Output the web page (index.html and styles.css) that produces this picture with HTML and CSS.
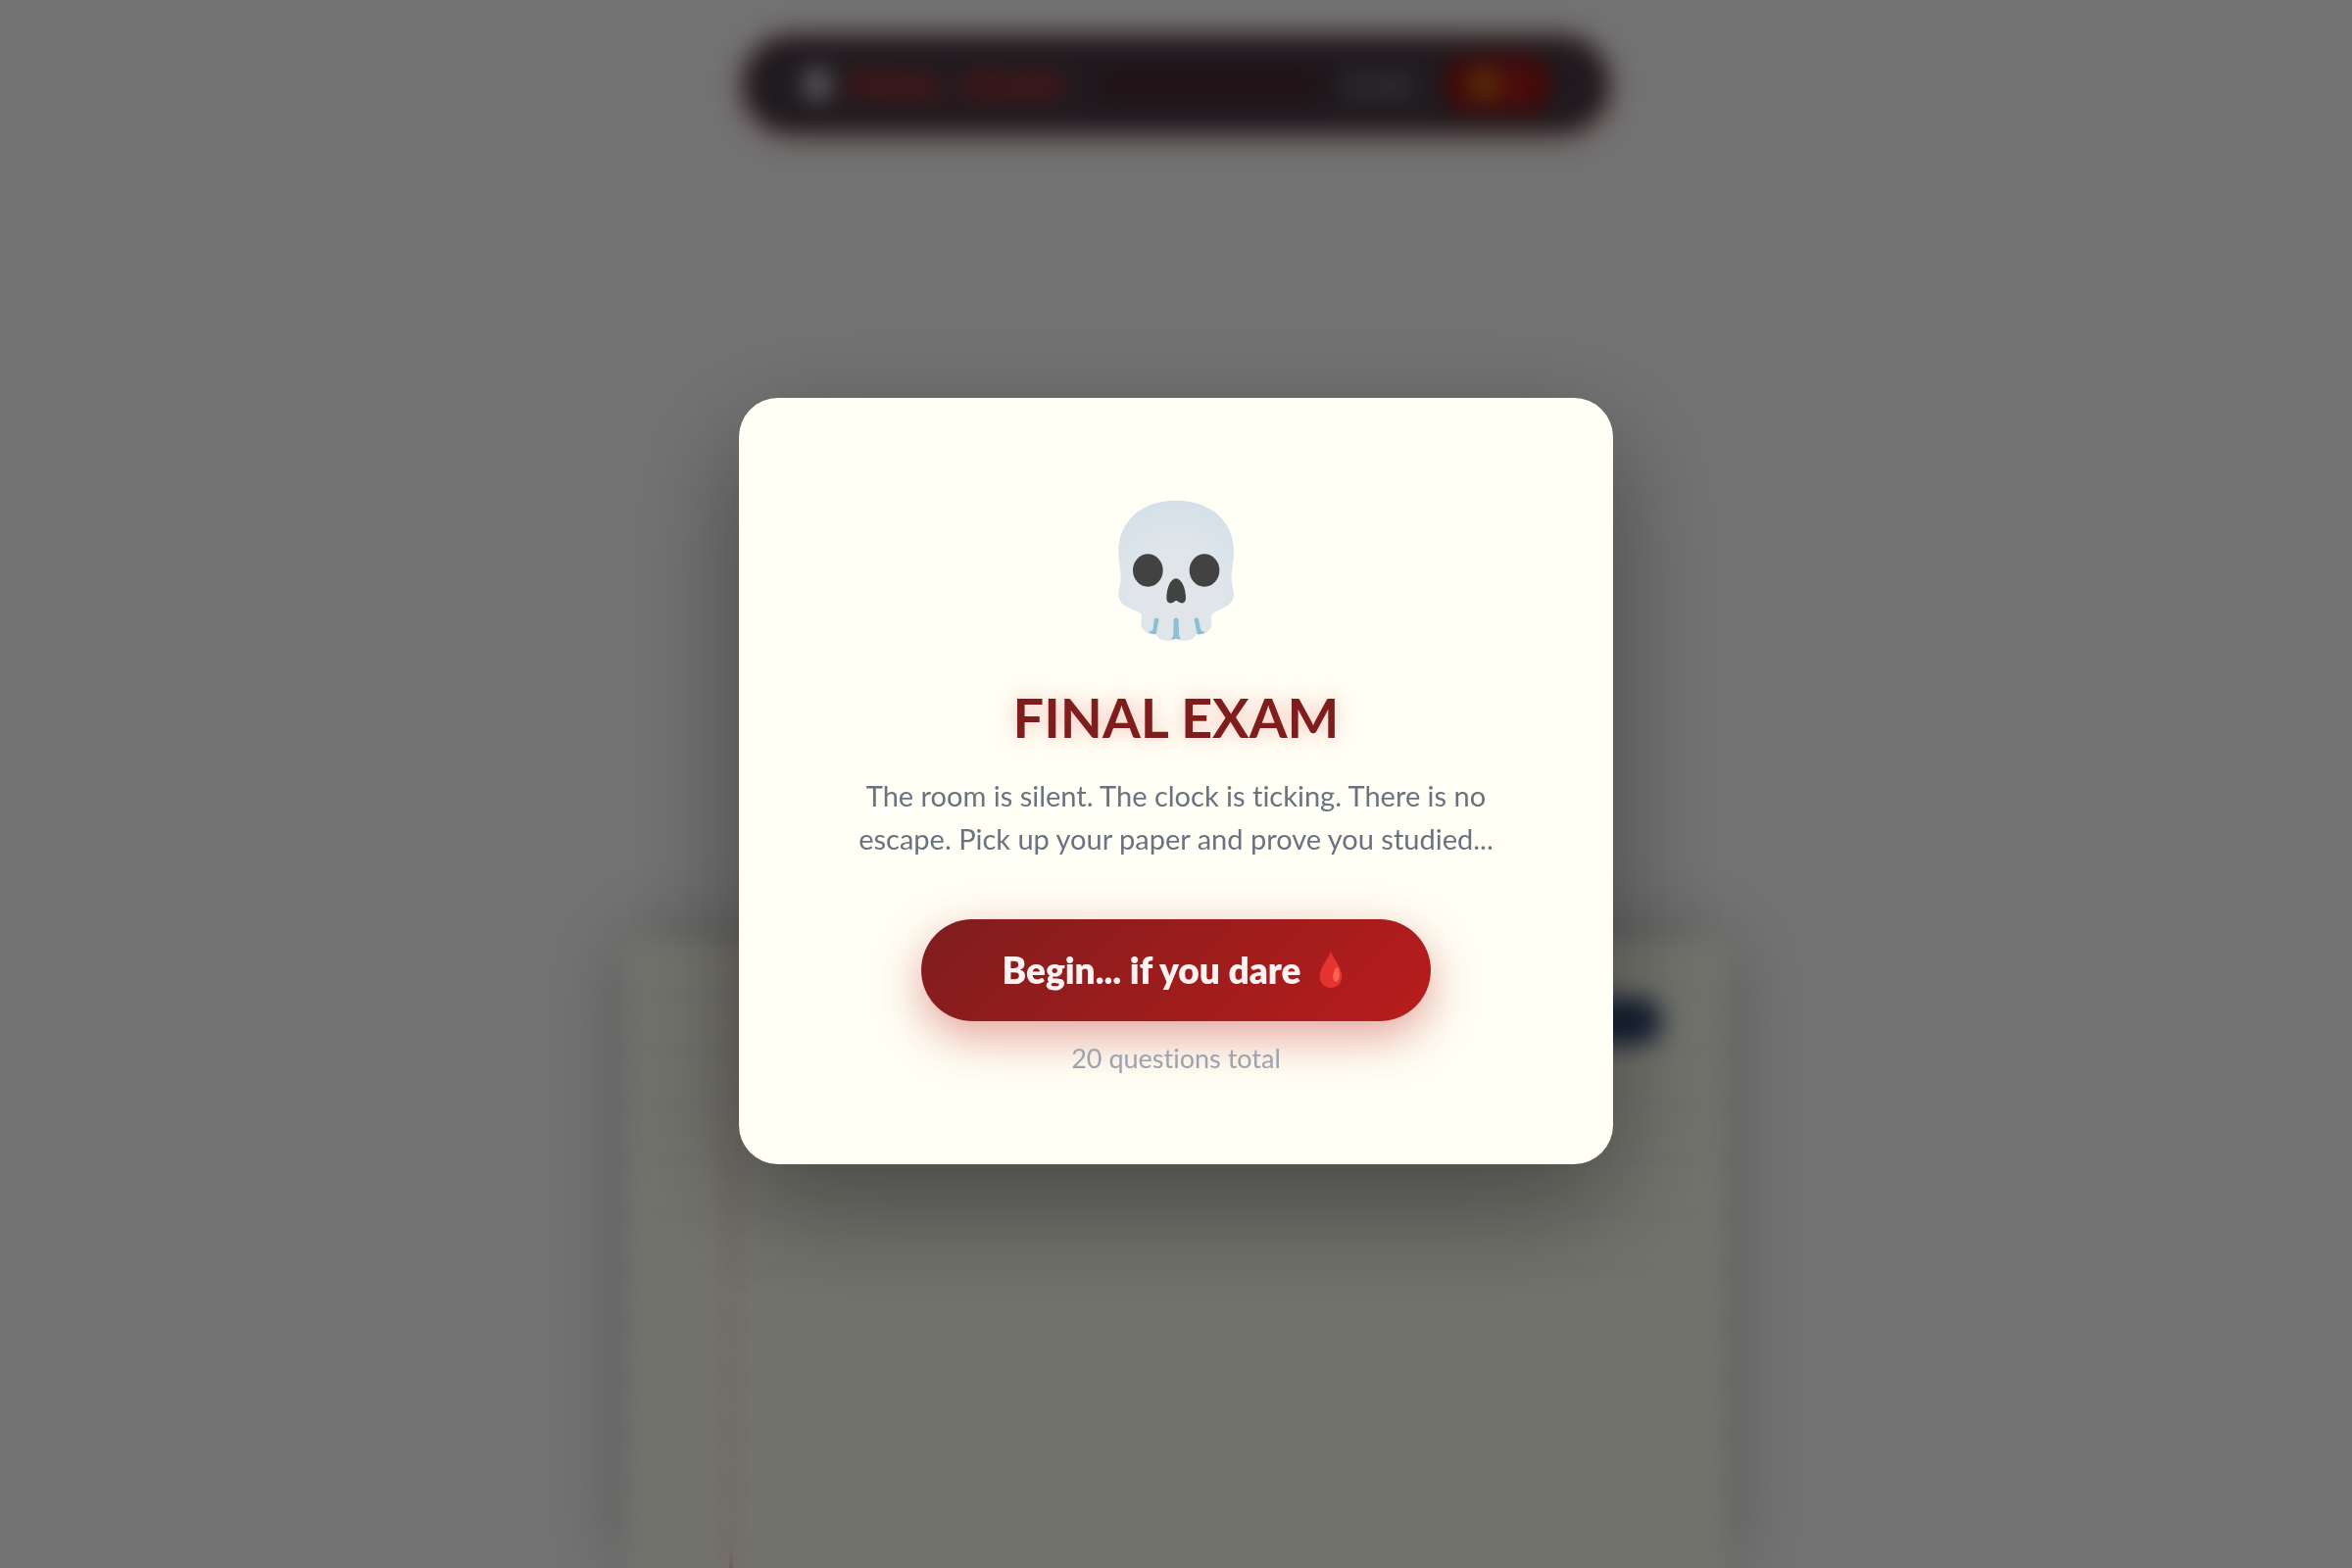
FILE: index.html
```html
<!DOCTYPE html>
<html lang="en">
<head>
<meta charset="utf-8">
<meta name="viewport" content="width=device-width, initial-scale=1">
<title>Final Exam</title>
<link rel="stylesheet" href="styles.css">
</head>
<body>
<div class="page" aria-hidden="true">
  <header class="exam-bar">
    <span class="exam-mark"></span>
    <span class="exam-name"><span>FINAL</span><span>EXAM</span></span>
    <span class="exam-progress"></span>
    <span class="exam-count">0/20</span>
    <button class="exam-lives" type="button" tabindex="-1"><span class="coin"></span>0</button>
  </header>
  <main class="paper">
    <button class="paper-action" type="button" tabindex="-1"></button>
  </main>
</div>

<div class="overlay">
  <section class="card" role="dialog" aria-modal="true" aria-labelledby="exam-title">
    <svg class="skull" viewBox="120 90 360 432" aria-hidden="true">
      <defs>
        <radialGradient id="bone" gradientUnits="userSpaceOnUse" cx="300" cy="380" r="290">
          <stop offset="0" stop-color="#e3e5ea"/>
          <stop offset=".5" stop-color="#dfe5ea"/>
          <stop offset="1" stop-color="#d5e0e8"/>
        </radialGradient>
      </defs>
      <path fill="url(#bone)" d="M300 92C190 92 124 160 124 246C124 285 131 305 131 330C131 350 124 358 124 382C124 412 160 424 186 434C198 439 194 450 193 466C191 489 210 503 239 503C246 516 259 521 274 521C286 521 293 520 300 515C307 520 316 521 328 521C342 521 354 516 362 503C390 503 412 489 409 466C408 450 404 444 418 434C440 423 477 411 477 380C477 358 470 350 470 330C470 305 477 285 477 246C477 160 410 92 300 92Z"/>
      <ellipse cx="214" cy="306" rx="46" ry="50" fill="#424242"/>
      <ellipse cx="387" cy="306" rx="46" ry="50" fill="#424242"/>
      <path fill="#424242" d="M300 331C283 331 271 361 271 391C271 405 281 409 289 405C296 401 298 398 300 398C303 398 306 402 313 405C322 409 330 404 330 391C330 361 317 331 300 331Z"/>
      <path fill="#8bc0d3" d="M233 459C235 449 248 450 247 459L239 501C229 502 220 499 214 494C226 493 229 490 230 483ZM293 458C293 449 308 449 308 458L309 500C310 510 312 512 315 515C308 519 304 515 300 515C296 515 292 519 285 515C289 512 292 509 292 500ZM356 459C355 450 368 449 370 459L374 483C375 490 381 493 390 496C384 501 374 503 365 501Z"/>
    </svg>
    <h1 class="title" id="exam-title">FINAL EXAM</h1>
    <p class="intro">The room is silent. The clock is ticking. There is no escape. Pick up your paper and prove you studied...</p>
    <button class="begin" type="button">Begin... if you dare
      <svg class="drop" viewBox="0 0 66 111" aria-hidden="true">
        <path fill="#e53330" d="M33 0C29 22 0 48 0 77C0 98 14 111 33 111C52 111 66 98 66 77C66 48 38 22 33 0Z"/>
        <path fill="#ff6450" d="M50 49C45 54 40 66 40 79C40 90 45 94 50 92C56 90 59 81 59 72C59 61 55 51 50 49Z"/>
      </svg>
    </button>
    <p class="total">20 questions total</p>
  </section>
</div>
</body>
</html>
```
FILE: styles.css
```css
* {
  box-sizing: border-box;
}

body {
  margin: 0;
  background: #ffffff;
  font-family: Lato, "Noto Sans", sans-serif;
  font-variant-ligatures: none;
}

button {
  border: 0;
  font: inherit;
}

.page {
  display: flex;
  flex-direction: column;
  align-items: center;
  justify-content: space-between;
  height: 100vh;
  padding-top: 36px;
  overflow: hidden;
}

.exam-bar {
  display: flex;
  align-items: center;
  width: 884px;
  max-width: 94%;
  height: 100px;
  padding: 0 56px 0 60px;
  border: 4px solid #6d2a30;
  border-radius: 52px;
  background: #463b45;
  box-shadow: 0 4px 32px rgba(127, 29, 29, 0.4);
}

.exam-mark {
  width: 24px;
  height: 32px;
  border-radius: 12px;
  background: #e5e7eb;
}

.exam-name {
  display: flex;
  gap: 20px;
  margin-left: 20px;
  color: #e02626;
  font-size: 34px;
  font-weight: 800;
}

.exam-progress {
  flex: 1;
  height: 24px;
  margin: 0 20px 0 32px;
  border-radius: 12px;
  background: #4a252d;
}

.exam-count {
  color: #9ca3af;
  font-size: 29px;
  font-weight: 700;
}

.exam-lives {
  display: flex;
  align-items: center;
  justify-content: center;
  gap: 12px;
  width: 108px;
  height: 56px;
  margin-left: 36px;
  border-radius: 24px;
  background: #9c1010;
  color: #f87171;
  font-size: 29px;
}

.coin {
  width: 24px;
  height: 28px;
  border-radius: 50%;
  background: #d69e1a;
}

.paper {
  display: flex;
  justify-content: flex-end;
  align-items: flex-start;
  width: 1120px;
  max-width: 94%;
  height: 40vh;
  padding: 58px 64px;
  background:
    linear-gradient(90deg, transparent 104px, #f3a6a6 104px, #f3a6a6 108px, transparent 108px),
    repeating-linear-gradient(180deg, transparent 0 54px, #dbe2ea 54px 56px),
    #fffff2;
  box-shadow: 0 0 80px rgba(0, 0, 0, 0.3);
}

.paper-action {
  width: 240px;
  height: 48px;
  border-radius: 24px;
  background: #2f4a70;
}

.overlay {
  position: fixed;
  inset: 0;
  display: flex;
  align-items: center;
  justify-content: center;
  padding-bottom: 6px;
  background: rgba(0, 0, 0, 0.55);
  backdrop-filter: blur(12px);
}

.card {
  display: flex;
  flex-direction: column;
  align-items: center;
  width: 892px;
  max-width: 94%;
  padding: 104px 96px 88px;
  border-radius: 40px;
  background: #fffff5;
  box-shadow: 0 40px 120px rgba(0, 0, 0, 0.4);
  text-align: center;
}

.skull {
  width: 120px;
  height: 144px;
}

.title {
  margin: 46px 0 0;
  color: #7f1d1d;
  font-size: 56px;
  font-weight: 700;
  line-height: 64px;
  text-shadow: 0 0 20px rgba(220, 38, 38, 0.3);
}

.intro {
  margin: 26px 0 60px;
  color: #6b7280;
  font-size: 29px;
  line-height: 44px;
}

.begin {
  display: flex;
  align-items: center;
  gap: 16px;
  height: 104px;
  padding: 0 88px 2px 82px;
  border-radius: 52px;
  background: linear-gradient(135deg, #7f1d1d, #b91c1c);
  box-shadow: 0 16px 48px rgba(185, 28, 28, 0.4);
  color: #fef2f2;
  font-size: 37px;
  font-weight: 800;
  cursor: pointer;
}

.drop {
  width: 28px;
  height: 38px;
}

.total {
  margin: 18px 0 0;
  color: #9ca3af;
  font-size: 27px;
  line-height: 40px;
}
```
